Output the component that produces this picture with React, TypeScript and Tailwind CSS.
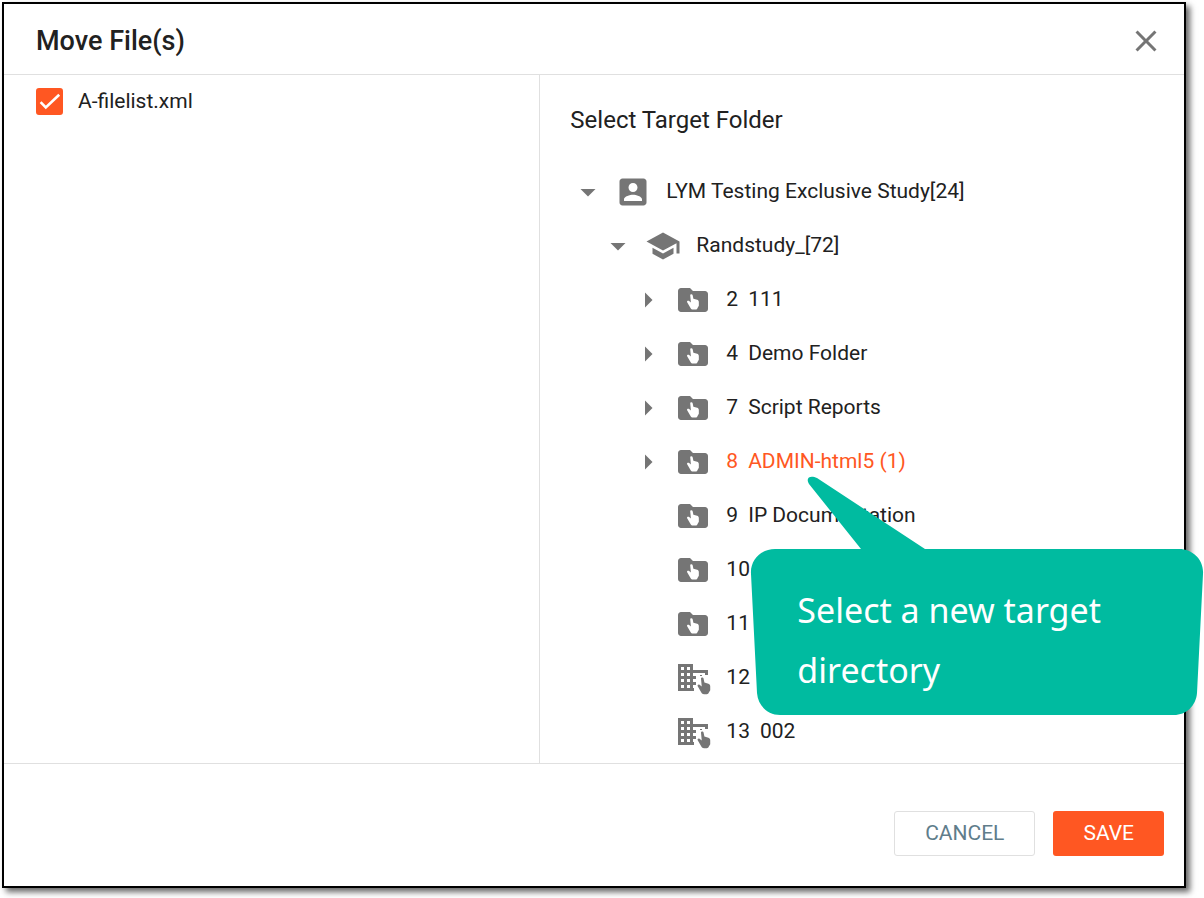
import { useState } from 'react';

type IconKind = 'account' | 'school' | 'folder' | 'site';

interface TreeNode {
  id: string;
  name: string;
  icon: IconKind;
  children?: TreeNode[];
  expandable?: boolean;
  hint?: boolean;
}

const tree: TreeNode = {
  id: '',
  name: 'LYM Testing Exclusive Study[24]',
  icon: 'account',
  children: [
    {
      id: '',
      name: 'Randstudy_[72]',
      icon: 'school',
      children: [
        { id: '2', name: '111', icon: 'folder', expandable: true },
        { id: '4', name: 'Demo Folder', icon: 'folder', expandable: true },
        { id: '7', name: 'Script Reports', icon: 'folder', expandable: true },
        { id: '8', name: 'ADMIN-html5 (1)', icon: 'folder', expandable: true, hint: true },
        { id: '9', name: 'IP Documentation', icon: 'folder' },
        { id: '10', name: '', icon: 'folder' },
        { id: '11', name: '', icon: 'folder' },
        { id: '12', name: '', icon: 'site' },
        { id: '13', name: '002', icon: 'site' },
      ],
    },
  ],
};

// pointing hand, 12 x 16 box
const HAND =
  'M3.4 1.6C3.2.4 5.4-.1 5.8 1.4L6.6 5.2L10.4 6.2C11.6 6.6 12.1 7.4 12.1 8.6V12.2L10.8 14.4C10.4 15.5 9.8 16 8.8 16H6.2C5 16 4.3 15.5 3.7 14.4L.3 8.6C-.3 7.4 1 6.6 2 7.2L4.1 8.8Z';

function NodeIcon({ kind }: { kind: IconKind }) {
  if (kind === 'site') {
    return (
      <svg viewBox="0 0 36 36" className="size-9 shrink-0 fill-[#757575]">
        <path
          fillRule="evenodd"
          d="M3 4h15v27H3zM6 7v3h3V7zM12 7v3h3V7zM6 13v3h3v-3zM12 13v3h3v-3zM6 19v3h3v-3zM12 19v3h3v-3zM6 25v3h3v-3zM12 25v3h3v-3z"
        />
        <path d="M18 10h15v5h-3v-2H18zM18 16h3v3h-3zM18 22h3v3h-3zM18 28h1v3h-1z" />
        <path d="M25 15h2v1h-2z" />
        <path d={HAND} transform="translate(22.4 17) scale(1.06 1.08)" />
      </svg>
    );
  }
  return (
    <svg viewBox="0 0 24 24" className="size-9 shrink-0 fill-[#757575]">
      {kind === 'account' && (
        <path d="M3 5v14c0 1.1.89 2 2 2h14c1.1 0 2-.9 2-2V5c0-1.1-.9-2-2-2H5c-1.11 0-2 .9-2 2zm12 4c0 1.66-1.34 3-3 3s-3-1.34-3-3 1.34-3 3-3 3 1.34 3 3zm-9 8c0-2 4-3.1 6-3.1s6 1.1 6 3.1v1H6v-1z" />
      )}
      {kind === 'school' && (
        <path d="M5 13.18v4L12 21l7-3.82v-4L12 17l-7-3.82zM12 3L1 9l11 6 9-4.91V17h2V9L12 3z" />
      )}
      {kind === 'folder' && (
        <>
          <path d="M10 4H4c-1.1 0-1.99.9-1.99 2L2 18c0 1.1.9 2 2 2h16c1.1 0 2-.9 2-2V8c0-1.1-.9-2-2-2h-8l-2-2z" />
          <path d={HAND} className="fill-white" transform="translate(7.9 7.8) scale(.66)" />
        </>
      )}
    </svg>
  );
}

function Callout() {
  return (
    <div className="pointer-events-none absolute top-8 left-[25px] z-10 h-[240px] w-[454px] px-[47px] pt-[104px]">
      <svg viewBox="0 0 454 240" className="absolute inset-0 size-full fill-[#00bba0]">
        <path d="M59 8C55 1 61 -1 67 2L175 73H429C443 73 454 84 453 98L447 217C446 230 436 239 424 239H30C18 239 8 230 7 217L1 98C0 84 11 73 25 73H111L59 8Z" />
      </svg>
      <p className="relative font-['Noto_Sans',sans-serif] text-[34px] leading-[60px] text-white">
        Select a new target
        <br />
        directory
      </p>
    </div>
  );
}

interface TreeItemProps {
  node: TreeNode;
  selected: string;
  onSelect: (name: string) => void;
}

function TreeItem({ node, selected, onSelect }: TreeItemProps) {
  const [open, setOpen] = useState(!!node.children);
  const isSelected = node.name !== '' && selected === node.name;

  return (
    <li role="treeitem" aria-selected={isSelected}>
      <div className="flex h-[54px] items-center">
        {node.children || node.expandable ? (
          <button type="button" aria-label={open ? 'Collapse' : 'Expand'} onClick={() => setOpen(!open)}>
            <svg viewBox="0 0 24 24" className="size-9 fill-[#757575]">
              <path d={open ? 'M7 10l5 5 5-5z' : 'M10 17l5-5-5-5z'} />
            </svg>
          </button>
        ) : (
          <span className="w-9" />
        )}
        <div className="relative ml-[9px] flex items-center gap-[15px]">
          <NodeIcon kind={node.icon} />
          <button
            type="button"
            onClick={() => onSelect(node.name)}
            className={`flex gap-[10px] pb-[3px] whitespace-nowrap ${isSelected ? 'text-[#ff5722]' : ''}`}
          >
            {node.id && <span>{node.id}</span>}
            {node.name && <span>{node.name}</span>}
          </button>
          {node.hint && (
            <div className="absolute top-0 left-[50px]">
              <Callout />
            </div>
          )}
        </div>
      </div>
      {open && node.children && (
        <ul role="group" className="pl-[30px]">
          {node.children.map((child) => (
            <TreeItem key={child.id + child.name} node={child} selected={selected} onSelect={onSelect} />
          ))}
        </ul>
      )}
    </li>
  );
}

export default function App() {
  const [checked, setChecked] = useState(true);
  const [target, setTarget] = useState('ADMIN-html5 (1)');

  return (
    <div className="flex min-h-screen flex-col bg-white pt-[2px] pr-[18px] pb-[10px] pl-[2px] font-[Roboto,sans-serif] text-[21px] leading-6 text-[#212121]">
      <div
        role="dialog"
        aria-labelledby="dialog-title"
        className="flex flex-1 flex-col border-2 border-black bg-white shadow-[4px_4px_6px_rgba(0,0,0,0.6)]"
      >
        <header className="flex items-center justify-between border-b border-[#e0e0e0] pt-[19px] pr-5 pb-[15px] pl-8">
          <h1 id="dialog-title" className="text-[27px] leading-9 font-medium">
            Move File(s)
          </h1>
          <button type="button" aria-label="Close">
            <svg viewBox="0 0 24 24" className="size-9 fill-[#757575]">
              <path d="M19 6.41L17.59 5 12 10.59 6.41 5 5 6.41 10.59 12 5 17.59 6.41 19 12 13.41 17.59 19 19 17.59 13.41 12z" />
            </svg>
          </button>
        </header>

        <div className="flex flex-1">
          <div className="w-5/11 border-r border-[#e0e0e0] pt-[13px] pl-8">
            <label className="flex items-center gap-[15px]">
              <span className="relative size-[27px]">
                <input
                  type="checkbox"
                  checked={checked}
                  onChange={(e) => setChecked(e.target.checked)}
                  className="block size-[27px] appearance-none rounded-[3px] border-2 border-[#757575] checked:border-[#ff5722] checked:bg-[#ff5722]"
                />
                {checked && (
                  <svg viewBox="0 0 27 27" className="pointer-events-none absolute inset-0 fill-none stroke-white stroke-[2.6]">
                    <path d="M4.6 14.2l5.2 5.2L23.2 6.8" />
                  </svg>
                )}
              </span>
              <span className="pb-px">A-filelist.xml</span>
            </label>
          </div>

          <div className="flex-1 pt-[29px] pb-1 pl-[30px]">
            <h2 className="mb-[29px] text-2xl leading-8">Select Target Folder</h2>
            <ul role="tree" aria-label="Select Target Folder">
              <TreeItem node={tree} selected={target} onSelect={setTarget} />
            </ul>
          </div>
        </div>

        <footer className="flex justify-end gap-[18px] border-t border-[#e0e0e0] pt-[47px] pr-5 pb-[30px]">
          <button type="button" className="h-[45px] rounded-[3px] border border-[#e0e0e0] px-[30px] pb-[2px] text-[#607d8b]">
            CANCEL
          </button>
          <button type="button" className="h-[45px] rounded-[3px] bg-[#ff5722] px-[30px] pb-[2px] text-white">
            SAVE
          </button>
        </footer>
      </div>
    </div>
  );
}
